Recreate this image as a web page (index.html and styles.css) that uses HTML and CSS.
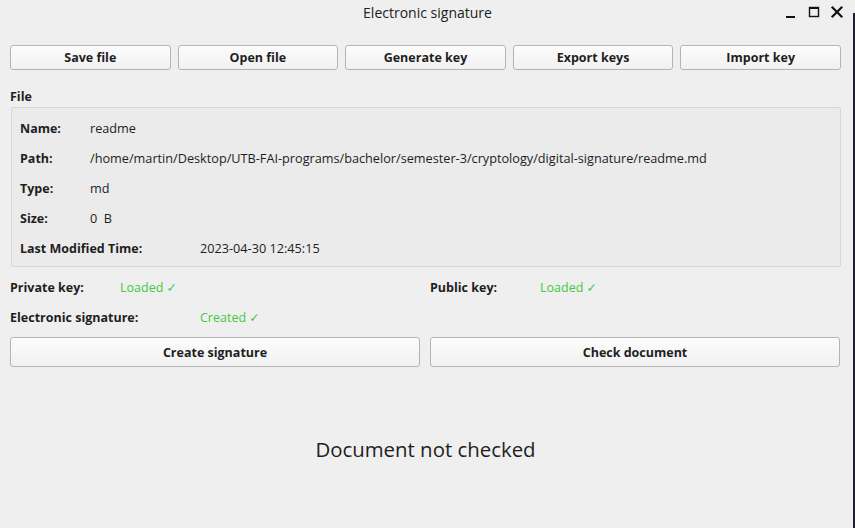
FILE: index.html
```html
<!DOCTYPE html>
<html>
<head>
<meta charset="utf-8">
<link rel="stylesheet" href="styles.css">
</head>
<body>
<div class="window">
  <div class="titlebar">
    <span class="title">Electronic signature</span>
    <div class="controls">
      <svg class="ctl" width="14" height="14" viewBox="0 0 14 14"><rect x="2" y="11" width="9" height="2" fill="#111"/></svg>
      <svg class="ctl" width="14" height="14" viewBox="0 0 14 14"><rect x="2.5" y="2.5" width="9" height="9" fill="none" stroke="#111" stroke-width="1.4"/><rect x="2" y="2" width="10" height="2" fill="#111"/></svg>
      <svg class="ctl" width="14" height="14" viewBox="0 0 14 14"><path d="M2.5 2.5 L11.5 11.5 M11.5 2.5 L2.5 11.5" stroke="#111" stroke-width="2.2" stroke-linecap="square"/></svg>
    </div>
  </div>
  <div class="main">
    <div class="toolbar">
      <button class="btn">Save file</button>
      <button class="btn">Open file</button>
      <button class="btn">Generate key</button>
      <button class="btn">Export keys</button>
      <button class="btn">Import key</button>
    </div>
    <div class="section-label">File</div>
    <div class="group">
      <div class="row"><span class="lbl">Name:</span><span class="val">readme</span></div>
      <div class="row"><span class="lbl">Path:</span><span class="val">/home/martin/Desktop/UTB-FAI-programs/bachelor/semester-3/cryptology/digital-signature/readme.md</span></div>
      <div class="row"><span class="lbl">Type:</span><span class="val">md</span></div>
      <div class="row"><span class="lbl">Size:</span><span class="val">0&nbsp;&nbsp;B</span></div>
      <div class="row"><span class="lbl wide">Last Modified Time:</span><span class="val">2023-04-30 12:45:15</span></div>
    </div>
    <div class="status">
      <div class="row"><span class="lbl key">Private key:</span><span class="ok">Loaded ✓</span></div>
      <div class="row"><span class="lbl key">Public key:</span><span class="ok">Loaded ✓</span></div>
      <div class="row"><span class="lbl sig">Electronic signature:</span><span class="ok">Created ✓</span></div>
      <div class="row"></div>
    </div>
    <div class="actions">
      <button class="btn big">Create signature</button>
      <button class="btn big">Check document</button>
    </div>
    <div class="result">Document not checked</div>
  </div>
  <div class="edge"></div>
</div>
</body>
</html>
```
FILE: styles.css
```css
html, body {
  margin: 0;
  padding: 0;
}
body {
  width: 855px;
  height: 528px;
  overflow: hidden;
  background: #efefef;
  font-family: "Open Sans", "DejaVu Sans", sans-serif;
  color: #1e1e1e;
}
.window {
  position: relative;
  width: 855px;
  height: 528px;
}
.titlebar {
  height: 26px;
  display: flex;
  align-items: center;
  justify-content: center;
  position: relative;
}
.title {
  font-size: 14px;
  line-height: 24px;
  color: #222;
}
.controls {
  position: absolute;
  right: 11px;
  top: 5px;
  display: flex;
  gap: 9px;
}
.main {
  padding: 0 14px 0 10px;
}
.toolbar {
  margin-top: 19px;
  display: flex;
  gap: 7px;
}
.btn {
  font-family: inherit;
  font-weight: 700;
  font-size: 12.5px;
  color: #1e1e1e;
  background: linear-gradient(#fcfcfc, #f1f1f1);
  border: 1px solid #b4b4b4;
  border-radius: 3px;
  padding: 0;
  margin: 0;
  height: 25px;
  flex: 1;
  box-shadow: inset 0 1px 0 #ffffff;
}
.section-label {
  margin-top: 19px;
  font-weight: 700;
  font-size: 12.5px;
  line-height: 16px;
}
.group {
  margin: 2px 0 0 1px;
  background: #ebebeb;
  border: 1px solid #d6d6d6;
  border-radius: 2px;
  padding: 5px 8px 3px 8px;
}
.row {
  height: 30px;
  display: flex;
  align-items: center;
  font-size: 12.5px;
}
.lbl {
  font-weight: 700;
  width: 70px;
  flex: none;
}
.lbl.wide { width: 180px; }
.lbl.key { width: 110px; }
.lbl.sig { width: 190px; }
.val {
  white-space: nowrap;
  font-size: 12.7px;
}
.status {
  margin-top: 5px;
  display: grid;
  grid-template-columns: 410px 410px;
  column-gap: 10px;
}
.ok {
  color: #42c942;
}
.actions {
  margin-top: 5px;
  display: grid;
  grid-template-columns: 410px 410px;
  column-gap: 10px;
}
.btn.big {
  height: 30px;
}
.result {
  margin-top: 70px;
  text-align: center;
  font-size: 20.4px;
  line-height: 24px;
  color: #1e1e1e;
}
.edge {
  position: absolute;
  right: 0;
  top: 13px;
  width: 2px;
  height: 515px;
  background: #1a1f2a;
}
```
